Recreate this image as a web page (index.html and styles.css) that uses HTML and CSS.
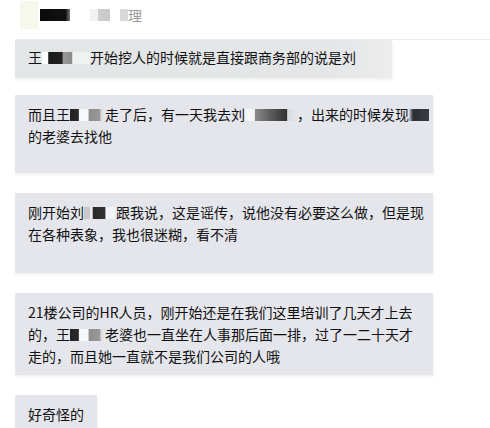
FILE: index.html
```html
<!DOCTYPE html>
<html lang="zh-CN">
<head>
  <meta charset="UTF-8">
  <title>聊天记录</title>
  <link rel="stylesheet" href="styles.css">
</head>
<body>
  <div class="header">
    <span class="smudge"></span><span class="mask dark wide"></span>
    <span class="mask grey mid"></span>
    <span class="mask soft small"></span><span class="title">理</span>
  </div>

  <div class="chat">
    <div class="bubble first">王<span class="mask name1"></span>开始挖人的时候就是直接跟商务部的说是刘</div>

    <div class="bubble tall">而且王<span class="mask name2"></span>走了后，有一天我去刘<span class="mask name3"></span>，出来的时候发现<span class="mask name4"></span><br>的老婆去找他</div>

    <div class="bubble tall">刚开始刘<span class="mask name5"></span>跟我说，这是谣传，说他没有必要这么做，但是现<br>在各种表象，我也很迷糊，看不清</div>

    <div class="bubble">21楼公司的HR人员，刚开始还是在我们这里培训了几天才上去<br>的，王<span class="mask name2"></span>老婆也一直坐在人事那后面一排，过了一二十天才<br>走的，而且她一直就不是我们公司的人哦</div>

    <div class="bubble short">好奇怪的</div>
  </div>
</body>
</html>
```

FILE: styles.css
```css
body { margin: 0; background: #fff; font-family: "Noto Sans CJK SC", "Noto Sans", sans-serif; color: #111; }

.header { height: 40px; margin-left: 15px; border-bottom: 1px solid #ededed; display: flex; align-items: center; padding-left: 5px; box-sizing: border-box; }
.header .title { font-size: 14px; color: #9a9a9a; margin-top: -10px; }
.smudge { display: inline-block; width: 18px; height: 28px; background: #f7f8ec; margin-top: -10px; }
.mask { display: inline-block; vertical-align: middle; }
.header .mask { margin-top: -10px; height: 12px; }
.dark { background: linear-gradient(90deg, #0a0a0a 0, #111 85%, #777 100%); }
.wide { width: 30px; margin-left: 2px; }
.grey { background: linear-gradient(90deg, #f2f2f2 0, #f2f2f2 40%, #cfcfcf 40%, #c8c8c8 100%); }
.mid { width: 20px; margin-left: 20px; }
.soft { background: #d8d8d8; }
.small { width: 8px; margin-left: 10px; }

.chat { padding-left: 15px; }
.bubble { width: 418px; box-sizing: border-box; background: #e5e6ec; padding: 8px 13px; font-size: 14px; line-height: 22px; margin-top: 20px; box-shadow: 1px 2px 3px rgba(0, 0, 0, 0.06); white-space: nowrap; }
.bubble.first { width: 377px; margin-top: 0; padding: 6px 13px 10px; background: linear-gradient(90deg, #e3e6e6 0, #e4e6e8 85%, #ececec 100%); }
.bubble.tall:nth-child(2) { margin-top: 17px; padding-bottom: 26px; }
.bubble.tall { padding-bottom: 28px; }
.bubble.short { width: 82px; padding-top: 8px; }

.bubble .mask { height: 12px; margin-top: -3px; }
.name1 { width: 48px; background: linear-gradient(90deg, #fff 0, #fff 12%, #1a1a1a 14%, #222 42%, #9a9a9a 44%, #8a8a8a 62%, #f0f2f2 64%, #eef2f0 100%); }
.name2 { width: 35px; background: linear-gradient(90deg, #222 0, #2a2a2a 24%, #f6f8fa 26%, #f6f8fa 52%, #8e8e8e 54%, #999 86%, #dadada 88%, #e8e8e8 100%); }
.name3 { width: 52px; background: linear-gradient(90deg, #f4f6f8 0, #f4f6f8 18%, #8b8b8b 20%, #5a5a5a 50%, #333 80%, #d8dadd 82%, #e5e6ec 100%); }
.name4 { width: 20px; background: linear-gradient(90deg, #cfd3d8 0, #2b2f33 20%, #3a3e42 100%); }
.name5 { width: 32px; background: linear-gradient(90deg, #c8c8c8 0, #c8c8c8 18%, #e9eaee 20%, #e9eaee 26%, #2a2a2a 28%, #333 66%, #f3f4f7 68%, #f3f4f7 100%); }
```
